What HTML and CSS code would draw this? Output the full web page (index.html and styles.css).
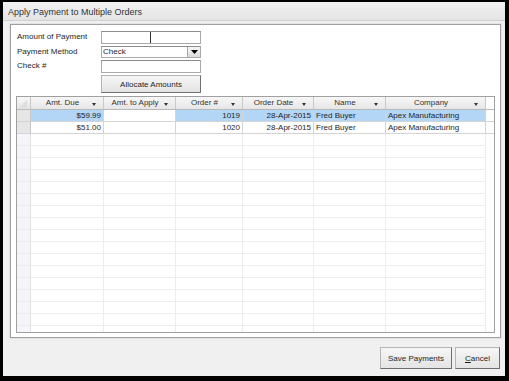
FILE: index.html
```html
<!DOCTYPE html>
<html lang="en">
<head>
   <title>Apply Payment to Multiple Orders</title>
   <link rel="stylesheet" href="styles.css">
</head>
<body>
   <div class="window">
      <div class="titlebar">Apply Payment to Multiple Orders</div>
      <div class="panel">
         <div class="form">
            <label>Amount of Payment</label>
            <div class="field"><span class="caret"></span></div>
            <label>Payment Method</label>
            <div class="field select">
               <span class="value">Check</span>
               <span class="drop">
                  <svg width="7" height="4" viewBox="0 0 7 4"><polygon points="0,0 7,0 3.5,4" fill="#000"/></svg>
               </span>
            </div>
            <label>Check #</label>
            <div class="field"></div>
            <span></span>
            <button class="button allocate">Allocate Amounts</button>
         </div>

         <div class="grid">
            <div class="row head">
               <div class="cell corner">
                  <svg width="12" height="11" viewBox="0 0 12 11"><polygon points="10,2 10,10 2,10" fill="#dedede"/></svg>
               </div>
               <div class="cell"><span>Amt. Due</span><i></i></div>
               <div class="cell"><span>Amt. to Apply</span><i></i></div>
               <div class="cell"><span>Order #</span><i></i></div>
               <div class="cell"><span>Order Date</span><i></i></div>
               <div class="cell"><span>Name</span><i></i></div>
               <div class="cell"><span>Company</span><i></i></div>
               <div class="cell filler"></div>
            </div>
            <div class="row selected">
               <div class="cell rh"></div>
               <div class="cell num">$59.99</div>
               <div class="cell plain"></div>
               <div class="cell num">1019</div>
               <div class="cell num">28-Apr-2015</div>
               <div class="cell">Fred Buyer</div>
               <div class="cell">Apex Manufacturing</div>
               <div class="cell filler"></div>
            </div>
            <div class="row">
               <div class="cell rh"></div>
               <div class="cell num">$51.00</div>
               <div class="cell"></div>
               <div class="cell num">1020</div>
               <div class="cell num">28-Apr-2015</div>
               <div class="cell">Fred Buyer</div>
               <div class="cell">Apex Manufacturing</div>
               <div class="cell filler"></div>
            </div>
            <div class="row empty">
               <div class="col rh"></div>
               <div class="col"></div>
               <div class="col"></div>
               <div class="col"></div>
               <div class="col"></div>
               <div class="col"></div>
               <div class="col"></div>
               <div class="col filler"></div>
            </div>
         </div>
      </div>
      <div class="footer">
         <button class="button save">Save Payments</button>
         <button class="button cancel"><u>C</u>ancel</button>
      </div>
   </div>
</body>
</html>
```

FILE: styles.css
```css
* {
    margin: 0;
    padding: 0;
    box-sizing: border-box;
}
body {
    background: #000;
    width: 509px;
    height: 381px;
    overflow: hidden;
    font-family: "Liberation Sans", Arial, sans-serif;
    font-size: 8px;
    color: #1e1e1e;
}
.window {
    margin: 2px 4px 5px 3px;
    height: 374px;
    background: #f0f0f0;
    display: flex;
    flex-direction: column;
}
.titlebar {
    height: 19px;
    padding: 5px 0 0 5px;
    font-size: 9px;
    color: #333;
    background: linear-gradient(#f2f2f2, #e4e4e4);
    border-bottom: 1px solid #cfcfcf;
}
.panel {
    margin: 3px 4px 0 7px;
    height: 314px;
    background: #fff;
    border: 1px solid #a0a0a0;
    box-shadow: 0 0 0 1px #e2e2e2;
    padding: 6px 5px 0 5px;
}
.form {
    display: grid;
    grid-template-columns: 84px 100px;
    grid-template-rows: 13px 12px 13px 18px;
    row-gap: 2px;
    padding-left: 1px;
}
.form label {
    line-height: 11px;
}
.field {
    border: 1px solid #a9a9a9;
    border-top-color: #8c8c8c;
    background: #fff;
    display: flex;
    align-items: center;
}
.caret {
    width: 1px;
    height: 100%;
    margin-left: 48px;
    background: #333;
}
.select .value {
    flex: 1;
    padding-left: 1px;
    line-height: 10px;
}
.drop {
    width: 13px;
    height: 100%;
    border-left: 1px solid #a9a9a9;
    background: linear-gradient(#f6f6f6, #dcdcdc);
    display: flex;
    align-items: center;
    justify-content: center;
}
.button {
    font-family: "Liberation Sans", Arial, sans-serif;
    font-size: 8px;
    color: #1e1e1e;
    background: linear-gradient(#f6f6f6, #e4e4e4);
    border: 1px solid #b4b4b4;
    border-right-color: #6e6e6e;
    border-bottom-color: #6e6e6e;
}
.allocate {
    height: 18px;
}
.grid {
    margin-top: 3px;
    height: 237px;
    border: 1px solid #a0a0a0;
    display: flex;
    flex-direction: column;
    overflow: hidden;
}
.row {
    display: grid;
    grid-template-columns: 14px 73px 72px 67px 71px 72px 100px 9px;
    height: 12px;
    flex: none;
}
.cell {
    border-right: 1px solid #d4d4d4;
    border-bottom: 1px solid #d4d4d4;
    padding: 0 2px;
    line-height: 11px;
    white-space: nowrap;
    overflow: hidden;
}
.num {
    text-align: right;
}
.head {
    height: 13px;
}
.head .cell {
    background: linear-gradient(#f7f7f7, #e6e6e6);
    border-right-color: #c8c8c8;
    border-bottom-color: #b8b8b8;
    color: #333;
    line-height: 12px;
    display: flex;
    align-items: center;
    padding: 0 0 0 6px;
}
.head .cell span {
    flex: 1;
    text-align: center;
}
.head .cell i {
    flex: none;
    margin: 2px 7px 0 4px;
    width: 0;
    height: 0;
    border-left: 2.5px solid transparent;
    border-right: 2.5px solid transparent;
    border-top: 3px solid #333;
}
.head .corner {
    padding: 0;
}
.head .filler {
    border-right: none;
    background: linear-gradient(#f7f7f7, #ececec);
}
.rh {
    background: #e6e6e6;
    border-right-color: #c8c8c8;
}
.selected .cell {
    background: #b3d6f6;
}
.selected .plain {
    background: #fff;
}
.selected .rh {
    background: #e6e6e6;
}
.row .filler {
    border-right: none;
    background: #fff;
}
.empty {
    flex: 1;
    height: auto;
}
.col {
    border-right: 1px solid #ededed;
    background: repeating-linear-gradient(#fff 0, #fff 11px, #eeeeee 11px, #eeeeee 12px);
}
.col.rh {
    background: repeating-linear-gradient(#f4f4fa 0, #f4f4fa 11px, #ececf0 11px, #ececf0 12px);
    border-right-color: #e2e2e2;
}
.col.filler {
    border-right: none;
}
.footer {
    display: flex;
    justify-content: flex-end;
    gap: 3px;
    margin: 9px 5px 0 0;
}
.footer .button {
    height: 22px;
}
.save {
    width: 72px;
}
.cancel {
    width: 45px;
}
```
